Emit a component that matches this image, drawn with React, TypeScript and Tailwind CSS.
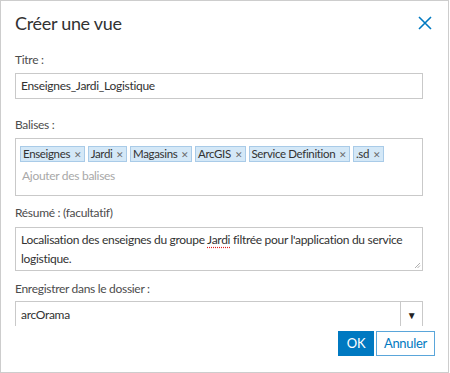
import React from "react";

const font = { fontFamily: "Lato, 'Noto Sans', sans-serif" };

function Tag({ label }: { label: string }) {
  return (
    <span className="inline-flex h-[16px] items-center gap-[4px] whitespace-nowrap border border-[#a9cbe8] bg-[#d4e8f7] pl-[2px] pr-[2px] text-[11.5px] leading-none tracking-[-0.35px] text-[#323232]">
      <span>{label}</span>
      <span className="text-[9px] text-[#6b6b6b]">✕</span>
    </span>
  );
}

export default function App() {
  return (
    <div className="h-[373px] w-[450px] bg-white tracking-[-0.3px]" style={font}>
      <div className="flex h-[373px] w-[449px] flex-col border border-[#cdcdcd] bg-white">
        <div className="flex h-[43px] shrink-0 items-center justify-between pl-[14px] pr-[16px]">
          <span className="text-[18px] leading-none tracking-[-0.3px] text-[#323232]">Créer une vue</span>
          <svg width="14" height="14" viewBox="0 0 14 14" className="mt-[1px]">
            <path d="M1 1L13 13M13 1L1 13" stroke="#0079c1" strokeWidth="1.6" fill="none" />
          </svg>
        </div>
        <div className="h-[282px] shrink-0 overflow-hidden px-[14px] text-[12px] text-[#4c4c4c]">
          <div className="mt-[8px] leading-[16px]">Titre :</div>
          <div className="mt-[5px] flex h-[26px] w-[408px] items-center border border-[#c9c9c9] px-[5px] text-[#323232]">
            Enseignes_Jardi_Logistique
          </div>
          <div className="mt-[18px] leading-[16px]">Balises :</div>
          <div className="mt-[5px] h-[58px] w-[408px] border border-[#c9c9c9] pl-[4px] pt-[7px]">
            <div className="flex gap-[3px]">
              <Tag label="Enseignes" />
              <Tag label="Jardi" />
              <Tag label="Magasins" />
              <Tag label="ArcGIS" />
              <Tag label="Service Definition" />
              <Tag label=".sd" />
            </div>
            <div className="mt-[6px] pl-[2px] leading-[16px] text-[#a8a8a8]">Ajouter des balises</div>
          </div>
          <div className="mt-[9px] leading-[16px]">Résumé : (facultatif)</div>
          <div className="relative mt-[6px] h-[44px] w-[408px] border border-[#c9c9c9] pl-[5px] pr-[4px] pt-[2px] leading-[19px] text-[#323232]">
            <span>Localisation des enseignes du groupe </span>
            <span className="underline decoration-[#e02020] decoration-dotted underline-offset-[3px]">Jardi</span>
            <span> filtrée pour l'application du service </span>
            <span>logistique.</span>
            <svg width="7" height="7" viewBox="0 0 7 7" className="absolute bottom-[1px] right-[1px]">
              <path d="M6 1L1 6M6 3.5L3.5 6" stroke="#9a9a9a" strokeWidth="0.8" fill="none" />
            </svg>
          </div>
          <div className="mt-[10px] leading-[16px]">Enregistrer dans le dossier :</div>
          <div className="mt-[4px] flex h-[34px] w-[408px] border-x border-t border-[#c9c9c9] text-[#323232]">
            <div className="flex h-[26px] flex-1 items-center pl-[5px]">arcOrama</div>
            <div className="flex h-[26px] w-[22px] items-center justify-center border-l border-[#c9c9c9] text-[10px] text-[#222]">
              ▼
            </div>
          </div>
        </div>
        <div className="flex justify-end gap-[2px] pr-[13px] pt-[5px]">
          <button className="h-[25px] w-[36px] bg-[#0079c1] text-[13px] text-white">OK</button>
          <button className="h-[25px] w-[59px] border border-[#5aa6da] bg-white text-[13px] text-[#0079c1]">
            Annuler
          </button>
        </div>
      </div>
    </div>
  );
}
